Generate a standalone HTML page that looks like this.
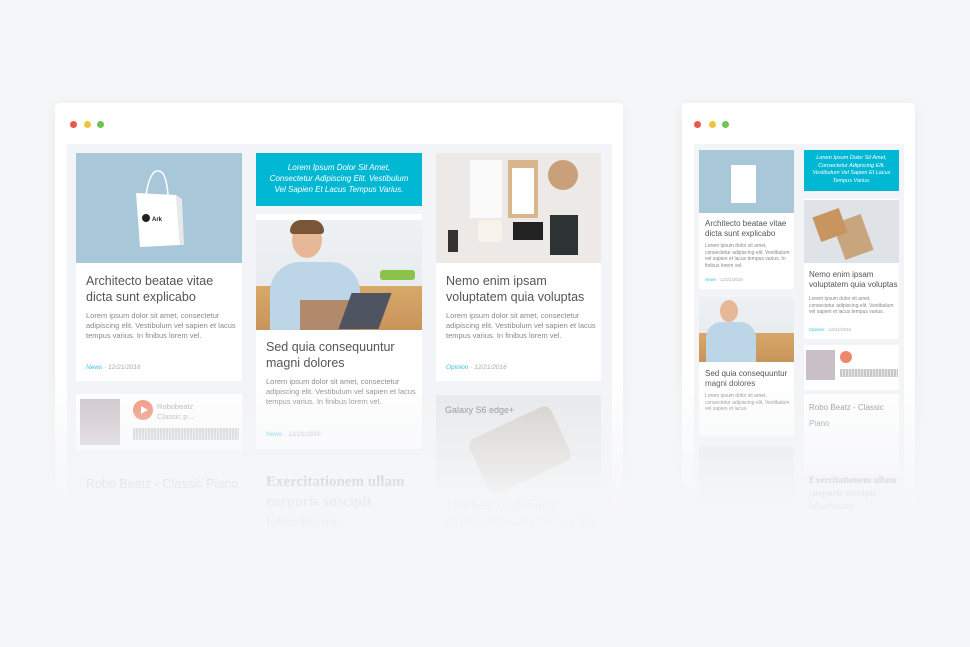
<!DOCTYPE html>
<html><head><meta charset="utf-8"><style>
*{margin:0;padding:0;box-sizing:border-box}
body{width:970px;height:647px;background:#f5f6f8;position:relative;overflow:hidden;font-family:"Liberation Sans",Arial,sans-serif}
.a{position:absolute}
.win{background:#fff;border-radius:4px;box-shadow:0 2px 12px rgba(0,0,0,.05)}
.inner{background:#f3f4f7}
.card{background:#fff}
.dot{width:7px;height:7px;border-radius:50%}
.t{color:#555;font-size:12.5px;line-height:16px}
.p{color:#888;font-size:7.5px;line-height:10px}
.d{font-size:6.5px;color:#aaa;font-style:italic}
.d b{color:#3cc3d8;font-weight:normal}
.bn{background:#00b8d4;color:#fff;font-style:italic;text-align:center}
.ser{font-family:"Liberation Serif",serif;font-weight:bold;color:#666}
</style></head><body>
<!-- left window -->
<div class="a win" style="left:55px;top:103px;width:568px;height:440px"></div>
<div class="a dot" style="left:70px;top:121px;background:#e8574e"></div>
<div class="a dot" style="left:84px;top:121px;background:#f3c33c"></div>
<div class="a dot" style="left:97px;top:121px;background:#6fc35b"></div>
<div class="a inner" style="left:67px;top:144px;width:545px;height:400px"></div>

<!-- col1 -->
<div class="a card" style="left:76px;top:153px;width:166px;height:228px"></div>
<div class="a" style="left:76px;top:153px;width:166px;height:110px;background:#a8c7d8"></div>
<svg class="a" style="left:128px;top:165px" width="60" height="90"><path d="M18 30 Q22 5 30 6 Q38 5 40 30" fill="none" stroke="#fff" stroke-width="1.5"/><polygon points="8,28 48,30 52,80 12,82" fill="#fff"/><polygon points="48,30 54,34 56,80 52,80" fill="#e6e8ea"/><circle cx="18" cy="53" r="4" fill="#222"/><text x="24" y="56" font-size="6" fill="#222" font-weight="bold">Ark</text></svg>
<div class="a t" style="left:86px;top:273px;width:150px">Architecto beatae vitae dicta sunt explicabo</div>
<div class="a p" style="left:86px;top:311px;width:150px">Lorem ipsum dolor sit amet, consectetur adipiscing elit. Vestibulum vel sapien et lacus tempus varius. In finibus lorem vel.</div>
<div class="a d" style="left:86px;top:364px"><b>News</b> · 12/21/2016</div>
<div class="a card" style="left:76px;top:394px;width:166px;height:56px"></div>
<div class="a" style="left:80px;top:399px;width:40px;height:46px;background:#c9bfc4"></div>
<div class="a" style="left:133px;top:400px;width:20px;height:20px;border-radius:50%;background:#f0876c"></div>
<div class="a" style="left:141px;top:406px;width:0;height:0;border-left:7px solid #fff;border-top:4px solid transparent;border-bottom:4px solid transparent"></div>
<div class="a p" style="left:157px;top:402px;color:#aaa">Robobeatz<br>Classic p...</div>
<div class="a" style="left:133px;top:428px;width:106px;height:12px;background:repeating-linear-gradient(90deg,#c9c9c9 0 2px,#e8e8e8 2px 3px)"></div>
<div class="a t" style="left:86px;top:476px;color:#999">Robo Beatz - Classic Piano</div>

<!-- col2 -->
<div class="a bn" style="left:256px;top:153px;width:166px;height:53px;font-size:8px;line-height:11px;padding-top:9px">Lorem Ipsum Dolor Sit Amet,<br>Consectetur Adipiscing Elit. Vestibulum<br>Vel Sapien Et Lacus Tempus Varius.</div>
<div class="a card" style="left:256px;top:214px;width:166px;height:235px"></div>
<div class="a" style="left:256px;top:220px;width:166px;height:110px;background:linear-gradient(#eef1f4 0,#e8ecef 60%,#d8a86a 60%,#c8945a 100%)"></div>
<div class="a" style="left:270px;top:262px;width:90px;height:68px;border-radius:30px 30px 0 0;background:#bcd6e8"></div>
<div class="a" style="left:292px;top:222px;width:30px;height:36px;border-radius:50%;background:#e7b898"></div>
<div class="a" style="left:290px;top:220px;width:34px;height:14px;border-radius:14px 14px 4px 4px;background:#7a5536"></div>
<div class="a" style="left:300px;top:300px;width:60px;height:30px;background:#b08a6a"></div>
<div class="a" style="left:345px;top:293px;width:40px;height:36px;background:#4e5560;transform:skewX(-20deg)"></div>
<div class="a" style="left:380px;top:270px;width:35px;height:10px;background:#8bc34a;border-radius:3px"></div>
<div class="a t" style="left:266px;top:339px;width:155px">Sed quia consequuntur magni dolores</div>
<div class="a p" style="left:266px;top:377px;width:150px">Lorem ipsum dolor sit amet, consectetur adipiscing elit. Vestibulum vel sapien et lacus tempus varius. In finibus lorem vel.</div>
<div class="a d" style="left:266px;top:431px"><b>News</b> · 12/21/2016</div>
<div class="a ser" style="left:266px;top:472px;font-size:15px;line-height:20px;width:150px">Exercitationem ullam corporis suscipit laboriosam</div>

<!-- col3 -->
<div class="a card" style="left:436px;top:153px;width:165px;height:228px"></div>
<div class="a" style="left:436px;top:153px;width:165px;height:110px;background:#ece9e7"></div>
<div class="a" style="left:470px;top:160px;width:32px;height:58px;background:#fafafa"></div>
<div class="a" style="left:508px;top:160px;width:30px;height:58px;background:#d9b58e"></div>
<div class="a" style="left:512px;top:168px;width:22px;height:46px;background:#fff"></div>
<div class="a" style="left:548px;top:160px;width:30px;height:30px;border-radius:50%;background:#caa07a"></div>
<div class="a" style="left:550px;top:215px;width:28px;height:40px;background:#2d3332"></div>
<div class="a" style="left:513px;top:222px;width:30px;height:18px;background:#222"></div>
<div class="a" style="left:478px;top:220px;width:24px;height:22px;border-radius:4px;background:#f7f3ea"></div>
<div class="a" style="left:448px;top:230px;width:10px;height:22px;background:#333"></div>
<div class="a t" style="left:446px;top:273px;width:150px">Nemo enim ipsam voluptatem quia voluptas</div>
<div class="a p" style="left:446px;top:311px;width:150px">Lorem ipsum dolor sit amet, consectetur adipiscing elit. Vestibulum vel sapien et lacus tempus varius. In finibus lorem vel.</div>
<div class="a d" style="left:446px;top:364px"><b>Opinion</b> · 12/21/2016</div>
<div class="a" style="left:436px;top:395px;width:165px;height:93px;background:#e6e7e8"></div>
<div class="a" style="left:445px;top:405px;font-size:9px;color:#777">Galaxy S6 edge+</div>
<div class="a" style="left:475px;top:420px;width:90px;height:60px;background:#cfcac3;border-radius:8px;transform:rotate(-25deg)"></div>
<div class="a t" style="left:446px;top:498px;width:150px;color:#999">The best multimedia experience with Galaxy S6 edge+</div>

<!-- right window -->
<div class="a win" style="left:682px;top:103px;width:233px;height:430px"></div>
<div class="a dot" style="left:694px;top:121px;background:#e8574e"></div>
<div class="a dot" style="left:709px;top:121px;background:#f3c33c"></div>
<div class="a dot" style="left:722px;top:121px;background:#6fc35b"></div>
<div class="a inner" style="left:694px;top:144px;width:210px;height:390px"></div>
<div class="a card" style="left:699px;top:150px;width:95px;height:139px"></div>
<div class="a" style="left:699px;top:150px;width:95px;height:63px;background:#a8c7d8"></div>
<div class="a" style="left:731px;top:165px;width:25px;height:38px;background:#fff"></div>
<div class="a t" style="left:705px;top:219px;width:88px;font-size:8px;line-height:10px">Architecto beatae vitae dicta sunt explicabo</div>
<div class="a p" style="left:705px;top:243px;width:88px;font-size:5px;line-height:6.5px">Lorem ipsum dolor sit amet, consectetur adipiscing elit. Vestibulum vel sapien et lacus tempus varius. In finibus lorem vel.</div>
<div class="a d" style="left:705px;top:277px;font-size:4.5px"><b>News</b> · 12/21/2016</div>
<div class="a card" style="left:699px;top:297px;width:95px;height:140px"></div>
<div class="a" style="left:699px;top:297px;width:95px;height:65px;background:linear-gradient(#eef1f4 0,#e8ecef 55%,#d8a86a 55%,#c8945a 100%)"></div>
<div class="a" style="left:706px;top:322px;width:50px;height:40px;border-radius:16px 16px 0 0;background:#bcd6e8"></div>
<div class="a" style="left:720px;top:300px;width:18px;height:22px;border-radius:50%;background:#e7b898"></div>
<div class="a t" style="left:705px;top:369px;width:88px;font-size:8px;line-height:10px">Sed quia consequuntur magni dolores</div>
<div class="a p" style="left:705px;top:393px;width:88px;font-size:5px;line-height:6.5px">Lorem ipsum dolor sit amet, consectetur adipiscing elit. Vestibulum vel sapien et lacus.</div>
<div class="a" style="left:699px;top:447px;width:95px;height:52px;background:#e6e7e8"></div>
<div class="a bn" style="left:804px;top:150px;width:95px;height:41px;font-size:5.5px;line-height:7.5px;padding-top:5px">Lorem Ipsum Dolor Sit Amet,<br>Consectetur Adipiscing Elit.<br>Vestibulum Vel Sapien Et Lacus<br>Tempus Varius.</div>
<div class="a card" style="left:804px;top:199px;width:95px;height:140px"></div>
<div class="a" style="left:804px;top:200px;width:95px;height:63px;background:#dfe2e6"></div>
<div class="a" style="left:838px;top:218px;width:30px;height:38px;background:#c9a57e;transform:rotate(-20deg)"></div>
<div class="a" style="left:816px;top:212px;width:28px;height:26px;background:#c89460;transform:rotate(-20deg)"></div>
<div class="a t" style="left:809px;top:270px;width:90px;font-size:8px;line-height:10px">Nemo enim ipsam voluptatem quia voluptas</div>
<div class="a p" style="left:809px;top:296px;width:88px;font-size:5px;line-height:6.5px">Lorem ipsum dolor sit amet, consectetur adipiscing elit. Vestibulum vel sapien et lacus tempus varius.</div>
<div class="a d" style="left:809px;top:327px;font-size:4.5px"><b>Opinion</b> · 12/21/2016</div>
<div class="a card" style="left:804px;top:345px;width:95px;height:45px"></div>
<div class="a" style="left:806px;top:350px;width:29px;height:30px;background:#c9bfc4"></div>
<div class="a" style="left:840px;top:351px;width:12px;height:12px;border-radius:50%;background:#f0876c"></div>
<div class="a" style="left:840px;top:369px;width:58px;height:8px;background:repeating-linear-gradient(90deg,#c9c9c9 0 2px,#e8e8e8 2px 3px)"></div>
<div class="a card" style="left:804px;top:394px;width:95px;height:80px"></div>
<div class="a t" style="left:809px;top:400px;width:90px;font-size:8px;color:#888">Robo Beatz - Classic Piano</div>
<div class="a ser" style="left:809px;top:475px;width:90px;font-size:9.5px;line-height:13px">Exercitationem ullam corporis suscipit laboriosam</div>

<!-- fade -->
<div class="a" style="left:0;top:375px;width:970px;height:272px;background:linear-gradient(rgba(245,246,248,0) 0,rgba(245,246,248,.5) 60px,rgba(245,246,248,.92) 120px,#f5f6f8 165px)"></div>
</body></html>
